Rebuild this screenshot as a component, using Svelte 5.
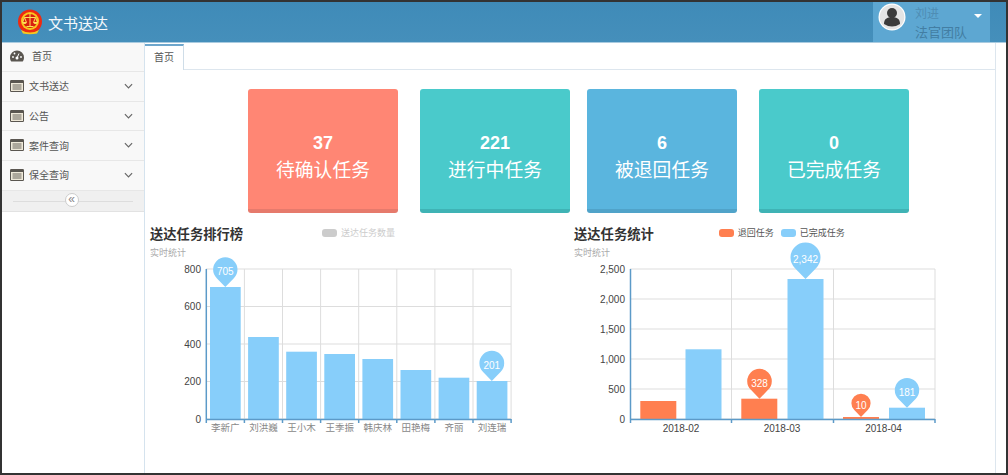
<script>
    const menu = [
        { label: '文书送达' },
        { label: '公告' },
        { label: '案件查询' },
        { label: '保全查询' }
    ];

    const cards = [
        [
            { value: 37, label: '待确认任务', tone: 'coral' },
            { value: 221, label: '进行中任务', tone: 'teal' }
        ],
        [
            { value: 6, label: '被退回任务', tone: 'sky' },
            { value: 0, label: '已完成任务', tone: 'teal' }
        ]
    ];

    const BLUE = '#87cefa';
    const ORANGE = '#ff7f50';

    // rank chart, page coordinates
    const rankTicks = [800, 600, 400, 200, 0];
    const rankNames = ['李新广', '刘洪巍', '王小木', '王季振', '韩庆林', '田艳梅', '齐丽', '刘连瑞'];
    const rankTops = [287, 337, 351.7, 354, 359, 370, 377.7, 381];
    const rankStep = 38.1;
    const rankX = 206.3;

    // stats chart
    const statTicks = [['2,500', 269], ['2,000', 299], ['1,500', 329], ['1,000', 359], ['500', 389], ['0', 419]];
    const statBars = [
        { x: 640.3, top: 401, color: ORANGE },
        { x: 685.5, top: 349.3, color: BLUE },
        { x: 741.3, top: 398.7, color: ORANGE },
        { x: 787.5, top: 279, color: BLUE },
        { x: 843, top: 417, color: ORANGE },
        { x: 889, top: 407.7, color: BLUE }
    ];
    const statMonths = [['2018-02', 681], ['2018-03', 782], ['2018-04', 883.5]];

    const rankPins = [
        { x: 225.3, tip: 287, r: 12.2, text: '705', color: BLUE },
        { x: 491.8, tip: 381, r: 12.4, text: '201', color: BLUE }
    ];
    const statPins = [
        { x: 805.5, tip: 279, r: 15, text: '2,342', color: BLUE },
        { x: 759.5, tip: 398.7, r: 12.3, text: '328', color: ORANGE },
        { x: 861, tip: 417, r: 9.6, text: '10', color: ORANGE },
        { x: 907, tip: 407.7, r: 12.2, text: '181', color: BLUE }
    ];

    function pinPath(p) {
        const cy = p.tip - p.r * 1.43;
        const dx = p.r * 0.7;
        const dy = p.r * 0.71;
        return `M${p.x} ${p.tip}L${p.x - dx} ${cy + dy}A${p.r} ${p.r} 0 1 1 ${p.x + dx} ${cy + dy}Z`;
    }
</script>

{#snippet listIcon()}
    <svg class="icon" viewBox="0 0 14 12" width="14" height="12">
        <rect x="0" y="0" width="14" height="12" rx="1.2" fill="#5a5650" />
        <rect x="1" y="3" width="12" height="8" fill="#eee8d8" />
        <path d="M2.5 5h9M2.5 7h9M2.5 9h9" stroke="#6a665e" stroke-width="1" />
    </svg>
{/snippet}

{#snippet pinMark(p)}
    <path d={pinPath(p)} fill={p.color} />
    <text class="pin-label" x={p.x} y={p.tip - p.r * 1.43 + 5.5}>{p.text}</text>
{/snippet}

<div class="frame">
    <header class="topbar">
        <div class="brand">
            <svg class="emblem" viewBox="0 0 26 26" width="26" height="26">
                <circle cx="13" cy="12.500" r="12" fill="#ee2a10" />
                <circle cx="13" cy="12" r="9" fill="#f8c81e" />
                <circle cx="13" cy="12" r="7" fill="#d81f0f" />
                <path d="M13 4.500v12.500M7.500 8.500h11M7.500 8.500l-2 5h4zM18.500 8.500l-2 5h4zM9.500 17.500h7" stroke="#ffe05a" stroke-width="1" fill="none" />
                <path d="M5.500 13.500a2 1.500 0 0 0 4 0zM16.500 13.500a2 1.500 0 0 0 4 0z" fill="#ffe05a" />
                <path d="M4 21q9 5 18 0l-2 3.500q-7 1.500-14 0z" fill="#f8c81e" />
            </svg>
            <span>文书送达</span>
        </div>
        <div class="user">
            <svg class="avatar" viewBox="0 0 28 28" width="28" height="28">
                <circle cx="14" cy="14" r="13.500" fill="#fff" />
                <circle cx="14" cy="14" r="12.300" fill="#e4e4e4" />
                <circle cx="14" cy="10" r="5" fill="#3b3b3b" />
                <path d="M6 21c0-5 3-7 8-7s8 2 8 7q-8 5-16 0z" fill="#3b3b3b" />
            </svg>
            <div class="who">
                <span>刘进</span>
                <span>法官团队</span>
            </div>
            <i class="caret"></i>
        </div>
    </header>

    <div class="body">
        <aside class="sidebar">
            <nav class="menu">
                <div class="item home">
                    <svg class="icon" viewBox="0 0 14 12" width="14" height="12">
                        <path d="M7 0.500a7 7 0 0 0-7 7c0 1.600.5 3 1.300 4h11.400c.8-1 1.300-2.400 1.300-4a7 7 0 0 0-7-7z" fill="#5a5650" />
                        <circle cx="7" cy="8" r="1.500" fill="#fff" />
                        <path d="M7 8l2-4.500" stroke="#fff" stroke-width="1" />
                        <circle cx="3" cy="7" r=".9" fill="#fff" />
                        <circle cx="4.500" cy="3.500" r=".9" fill="#fff" />
                        <circle cx="11" cy="7" r=".9" fill="#fff" />
                    </svg>
                    <span>首页</span>
                </div>
                {#each menu as m}
                    <div class="item">
                        {@render listIcon()}
                        <span>{m.label}</span>
                        <svg class="chev" viewBox="0 0 10 6" width="9" height="6">
                            <path d="M1 1l4 4 4-4" fill="none" stroke="#666" stroke-width="1.300" />
                        </svg>
                    </div>
                {/each}
            </nav>
            <div class="collapse">
                <span class="collapse-btn">«</span>
            </div>
        </aside>

        <main class="panel">
            <div class="tabs">
                <div class="tab">首页</div>
            </div>

            <div class="cards">
                {#each cards as pair}
                    <div class="pair">
                        {#each pair as c}
                            <div class="card {c.tone}">
                                <strong>{c.value}</strong>
                                <span>{c.label}</span>
                            </div>
                        {/each}
                    </div>
                {/each}
            </div>

            <div class="charts">
                <section class="chart">
                    <div class="chart-head">
                        <div>
                            <h3>送达任务排行榜</h3>
                            <p>实时统计</p>
                        </div>
                        <div class="legend muted">
                            <span><i style="background:#ccc"></i>送达任务数量</span>
                        </div>
                    </div>
                    <svg class="plot" viewBox="150 262 424 175" width="424" height="175">
                        {#each rankTicks as t, i}
                            <line class="grid" x1="206" x2="511" y1={269 + i * 37.5} y2={269 + i * 37.5} />
                            <text class="tick" x="201" y={272.500 + i * 37.5}>{t}</text>
                        {/each}
                        {#each rankNames as n, i}
                            <line class="grid" x1={rankX + (i + 1) * rankStep} x2={rankX + (i + 1) * rankStep} y1="269" y2="419" />
                            <rect x={rankX + i * rankStep + 3.7} y={rankTops[i]} width="30.700" height={419 - rankTops[i]} fill={BLUE} />
                            <text class="name" x={rankX + (i + 0.5) * rankStep} y="431">{n}</text>
                            <line class="axis" x1={rankX + i * rankStep} x2={rankX + i * rankStep} y1="419" y2="423" />
                        {/each}
                        <line class="axis" x1={rankX + 8 * rankStep} x2={rankX + 8 * rankStep} y1="419" y2="423" />
                        <line class="axis" x1={rankX} x2={rankX} y1="269" y2="419" />
                        <line class="axis" x1={rankX} x2={rankX + 8 * rankStep} y1="419.500" y2="419.500" />
                        {#each rankPins as p}
                            {@render pinMark(p)}
                        {/each}
                    </svg>
                </section>

                <section class="chart">
                    <div class="chart-head">
                        <div>
                            <h3>送达任务统计</h3>
                            <p>实时统计</p>
                        </div>
                        <div class="legend wide">
                            <span><i style="background:#ff7f50"></i>退回任务</span>
                            <span><i style="background:#87cefa"></i>已完成任务</span>
                        </div>
                    </div>
                    <svg class="plot" viewBox="574 262 424 175" width="424" height="175">
                        {#each statTicks as t}
                            <line class="grid" x1="630" x2="935" y1={t[1]} y2={t[1]} />
                            <text class="tick" x="625" y={t[1] + 3.5}>{t[0]}</text>
                        {/each}
                        {#each [731.5, 833.5, 935] as x}
                            <line class="grid" x1={x} x2={x} y1="269" y2="419" />
                        {/each}
                        {#each statBars as b}
                            <rect x={b.x} y={b.top} width="36" height={419 - b.top} fill={b.color} />
                        {/each}
                        {#each statMonths as m}
                            <text class="month" x={m[1]} y="432">{m[0]}</text>
                        {/each}
                        {#each [630.5, 731.5, 833.5, 935] as x}
                            <line class="axis" x1={x} x2={x} y1="419" y2="423" />
                        {/each}
                        <line class="axis" x1="630.500" x2="630.500" y1="269" y2="419" />
                        <line class="axis" x1="630.500" x2="935" y1="419.500" y2="419.500" />
                        {#each statPins as p}
                            {@render pinMark(p)}
                        {/each}
                    </svg>
                </section>
            </div>
        </main>
    </div>
</div>

<style>
    :global(body) {
        margin: 0;
        background: #fff;
        font-family: "Liberation Sans", "Noto Sans CJK SC", sans-serif;
    }

    .frame {
        width: 1008px;
        height: 475px;
        box-sizing: border-box;
        border: 2px solid #333;
        display: flex;
        flex-direction: column;
        overflow: hidden;
    }

    .topbar {
        height: 41px;
        box-sizing: border-box;
        flex: none;
        display: flex;
        justify-content: space-between;
        background: linear-gradient(180deg, #3f8bb8 0%, #458fbb 100%);
        border-bottom: 1px solid #a9cbe0;
    }

    .brand {
        display: flex;
        align-items: center;
        gap: 5px;
        padding-left: 15px;
        color: #f4f8fb;
        font-size: 15px;
    }

    .user {
        width: 117px;
        margin-right: 16px;
        display: flex;
        align-items: flex-start;
        background: #5da7d2;
        position: relative;
    }

    .avatar {
        margin: 1px 0 0 5px;
    }

    .who {
        display: flex;
        flex-direction: column;
        gap: 5px;
        margin: 5px 0 0 9px;
        font-size: 12px;
        line-height: 14px;
        color: #4f8db4;
    }

    .who span:last-child {
        font-size: 13px;
        color: #437ea3;
    }

    .caret {
        position: absolute;
        right: 8px;
        top: 12px;
        border-left: 4px solid transparent;
        border-right: 4px solid transparent;
        border-top: 4px solid #fff;
    }

    .body {
        flex: 1;
        display: flex;
        min-height: 0;
    }

    .sidebar {
        width: 142px;
        flex: none;
        border-right: 1px solid #d5e3ee;
    }

    .menu {
        background: #f8f8f8;
    }

    .item {
        height: 29.700px;
        box-sizing: border-box;
        display: flex;
        align-items: center;
        gap: 5px;
        padding: 0 11px 1px 8px;
        border-bottom: 1px solid #e7e7e7;
        font-size: 10px;
        color: #555;
    }

    .item.home {
        height: 29px;
        gap: 8px;
        padding-bottom: 3px;
    }

    .chev {
        margin-left: auto;
    }

    .collapse {
        height: 20px;
        background: #f0f0f0;
        border-bottom: 1px solid #e2e2e2;
        display: flex;
        align-items: center;
        justify-content: center;
        position: relative;
    }

    .collapse::before {
        content: "";
        position: absolute;
        left: 11px;
        right: 11px;
        top: 10px;
        border-top: 1px solid #ddd;
    }

    .collapse-btn {
        position: relative;
        width: 14px;
        height: 14px;
        margin: 0 3px 1px 0;
        box-sizing: border-box;
        border: 1px solid #ccc;
        border-radius: 50%;
        background: #fff;
        color: #888;
        font-size: 12px;
        line-height: 10px;
        text-align: center;
    }

    .panel {
        width: 851px;
        flex: none;
        box-sizing: border-box;
        border-right: 1px solid #dde6ee;
    }

    .tabs {
        height: 26px;
        box-sizing: border-box;
        margin-top: 1px;
        border-bottom: 1px solid #dde6ee;
        display: flex;
    }

    .tab {
        width: 39px;
        height: 26px;
        box-sizing: border-box;
        border-top: 2px solid #6da6cc;
        border-right: 1px solid #cfdde8;
        background: #fff;
        font-size: 10px;
        line-height: 24px;
        text-align: center;
        color: #555;
    }

    .cards {
        display: flex;
        gap: 17px;
        padding: 19px 0 0 103px;
    }

    .pair {
        display: flex;
        gap: 22px;
    }

    .card {
        width: 150px;
        height: 124px;
        box-sizing: border-box;
        border-radius: 3px;
        border-bottom: 4px solid;
        display: flex;
        flex-direction: column;
        align-items: center;
        justify-content: center;
        padding-top: 18px;
        color: #fff;
    }

    .card strong {
        font-size: 18px;
        line-height: 24px;
    }

    .card span {
        font-size: 18.800px;
        line-height: 31px;
    }

    .coral {
        background: #ff8674;
        border-color: #e67a6c;
    }

    .teal {
        background: #4acacb;
        border-color: #3fb3b5;
    }

    .sky {
        background: #5ab5de;
        border-color: #50a3c9;
    }

    .charts {
        display: flex;
        padding: 12px 0 0 5px;
    }

    .chart {
        width: 424px;
        flex: none;
    }

    .chart-head {
        height: 37px;
        display: flex;
        position: relative;
    }

    h3 {
        margin: 0;
        font-size: 13.300px;
        line-height: 20px;
        color: #333;
    }

    p {
        margin: 2px 0 0;
        font-size: 9px;
        line-height: 12px;
        color: #aaa;
    }

    .legend {
        display: flex;
        gap: 7px;
        margin: 1px 0 0 79px;
        height: 14px;
        font-size: 9px;
        line-height: 14px;
        color: #555;
    }

    .legend.wide {
        margin-left: 65px;
    }

    .legend.muted {
        color: #ccc;
    }

    .legend span {
        display: flex;
        align-items: center;
    }

    .legend i {
        width: 15px;
        height: 8px;
        margin-right: 4px;
        border-radius: 3px;
    }

    .plot {
        display: block;
        overflow: visible;
    }

    .grid {
        stroke: #ddd;
        stroke-width: 1;
    }

    .axis {
        stroke: #5c9ac8;
        stroke-width: 1.500;
    }

    .tick {
        font-size: 10px;
        fill: #444;
        text-anchor: end;
    }

    .name {
        font-size: 9.500px;
        fill: #888;
        text-anchor: middle;
    }

    .month {
        font-size: 10px;
        fill: #444;
        text-anchor: middle;
    }

    .pin-label {
        font-size: 10px;
        fill: #fff;
        text-anchor: middle;
    }
</style>
